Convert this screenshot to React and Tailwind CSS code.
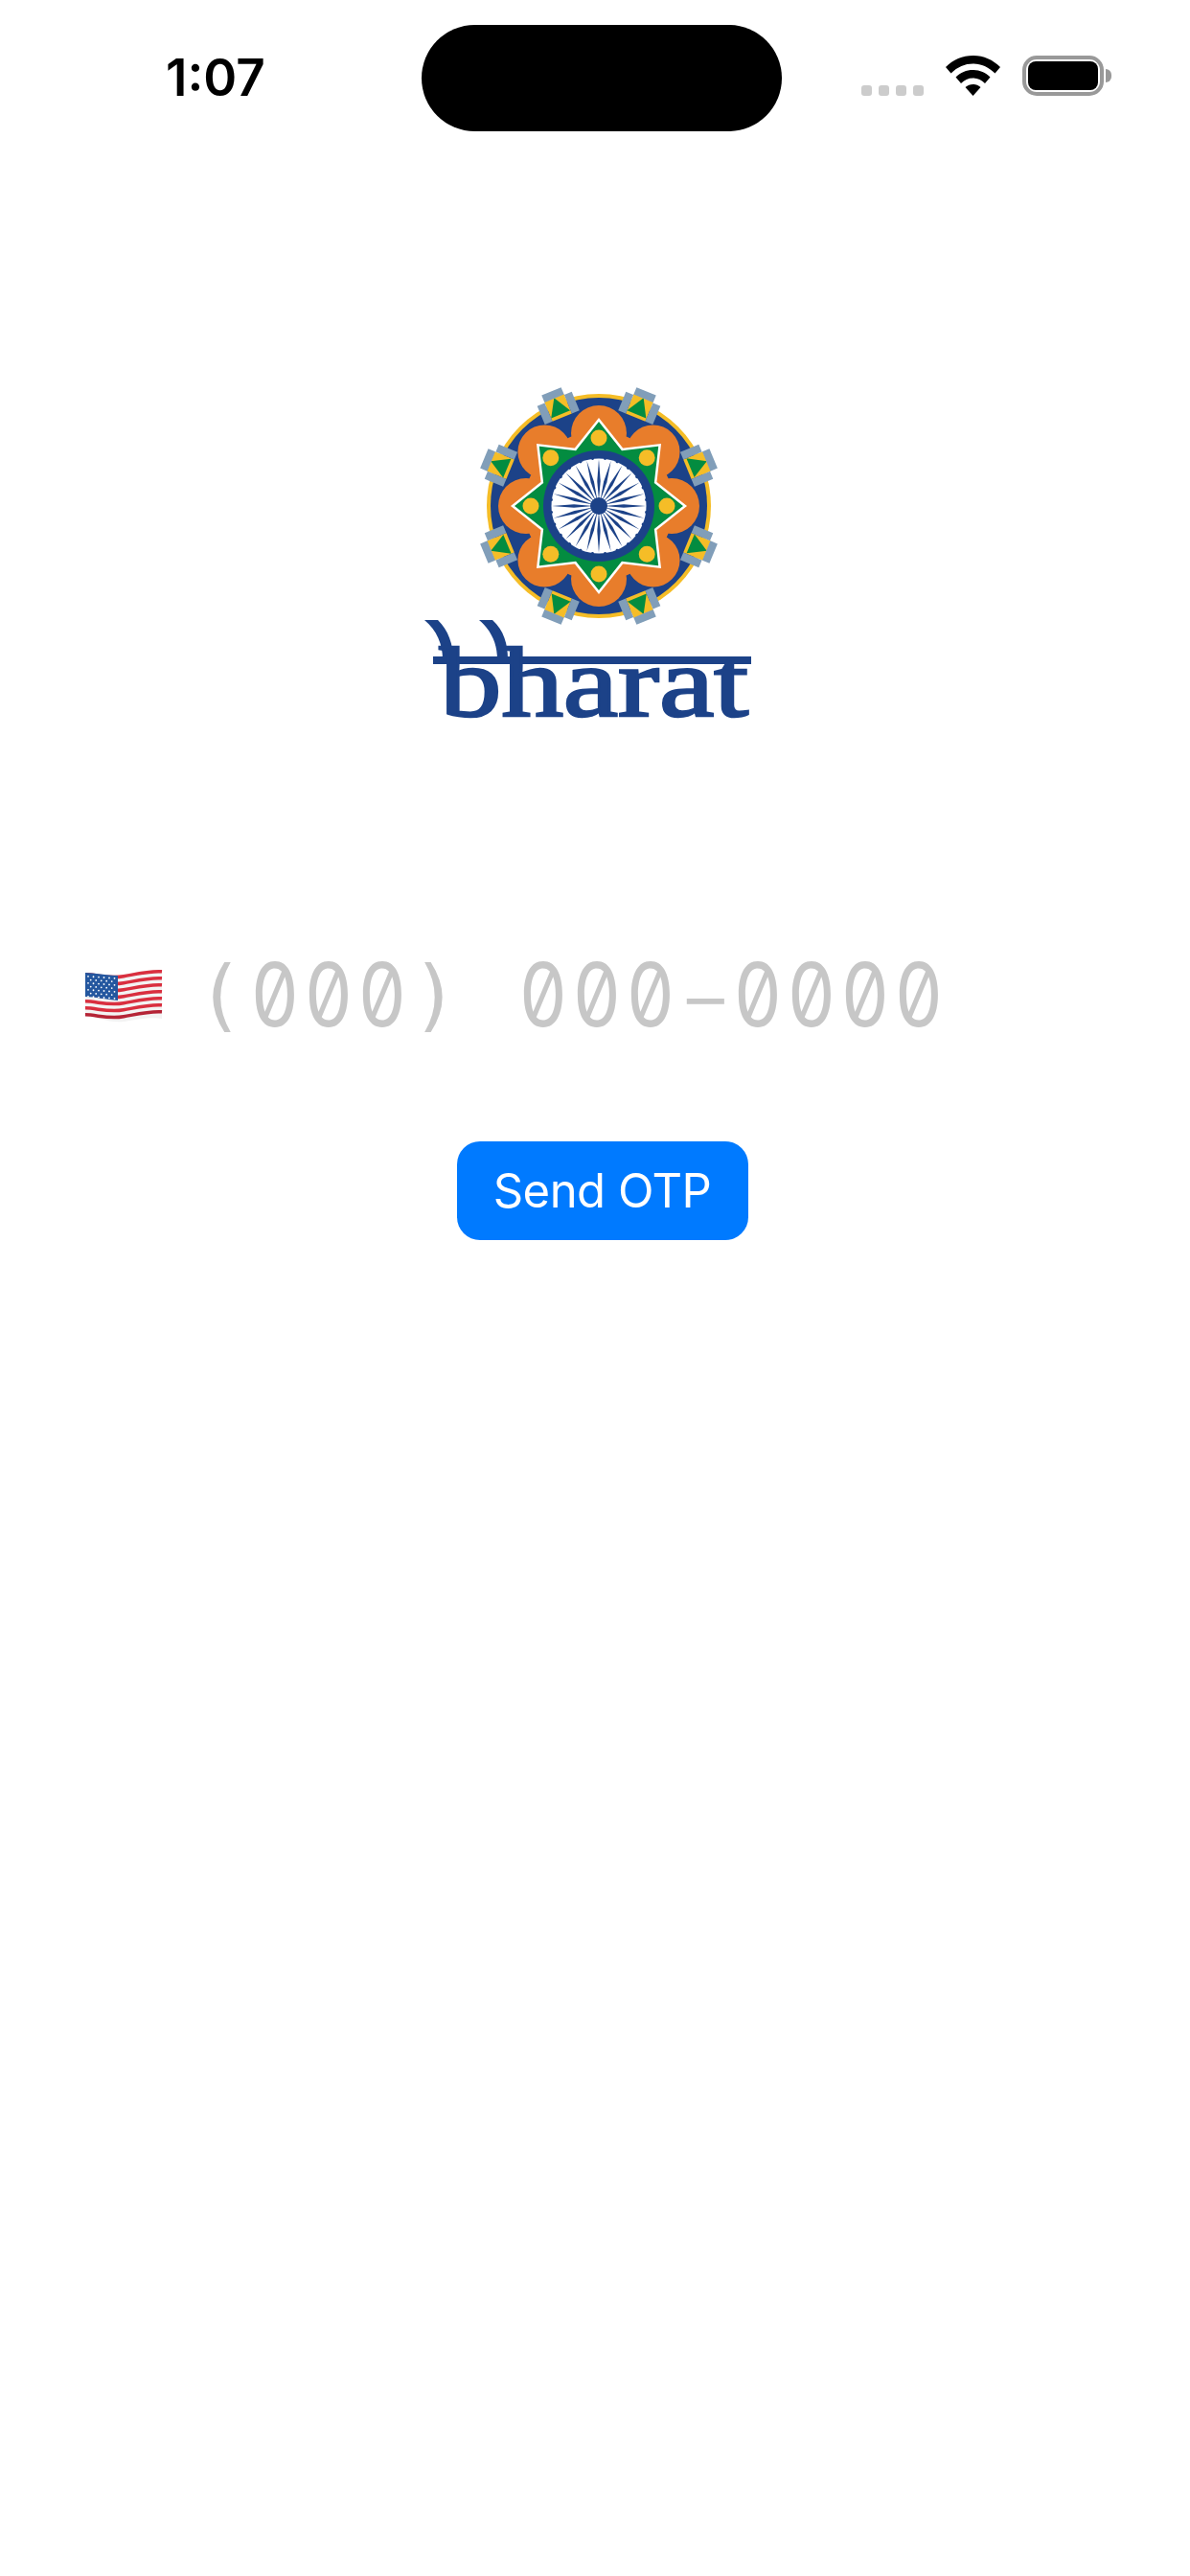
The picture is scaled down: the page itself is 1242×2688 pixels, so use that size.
const NAVY = "#1c4288";
const ANGLES = [0, 45, 90, 135, 180, 225, 270, 315];
const PHONE = "(000) 000-0000".split("");

function starPoints(outer, inner) {
  const pts = [];
  for (let i = 0; i < 16; i++) {
    const r = i % 2 === 0 ? outer : inner;
    const a = (i * 22.5 * Math.PI) / 180;
    pts.push(`${(r * Math.sin(a)).toFixed(2)},${(-r * Math.cos(a)).toFixed(2)}`);
  }
  return pts.join(" ");
}

function Ornament({ angle }) {
  return (
    <g transform={`rotate(${angle}) translate(0 -100)`}>
      <rect x="-11" y="-22" width="22" height="22" fill="#f5bd27" />
      <polygon points="0,-22 10.500,-3.500 -11,-3.500" fill="#038c40" />
      <rect x="-19.500" y="-21" width="8.500" height="21" fill="#819eb9" />
      <rect x="11" y="-21" width="8.500" height="21" fill="#819eb9" />
      <rect x="-11" y="-29.500" width="22" height="8" fill="#819eb9" />
    </g>
  );
}

function Emblem() {
  const spokes = Array.from({ length: 24 }, (_, i) => i * 15);
  return (
    <g transform="translate(625 528)">
      <circle r="117" fill="#f5bd27" />
      <circle r="113" fill={NAVY} />
      {ANGLES.map((a) => (
        <Ornament key={a} angle={a + 22.5} />
      ))}
      <circle r="78" fill="#e87d2b" />
      {ANGLES.map((a) => (
        <circle
          key={a}
          transform={`rotate(${a})`}
          cy={a % 90 === 0 ? -76 : -80}
          r={a % 90 === 0 ? 29 : 28}
          fill="#e87d2b"
        />
      ))}
      <polygon points={starPoints(90, 64)} fill="#038c40" stroke="#fff" strokeWidth="2.500" />
      {ANGLES.map((a) => (
        <circle key={a} transform={`rotate(${a})`} cy="-71" r="8.500" fill="#f5bd27" />
      ))}
      <circle r="58" fill={NAVY} />
      <circle r="49.500" fill="#fff" />
      {spokes.map((a) => (
        <g key={a} transform={`rotate(${a})`}>
          <polygon points="0,-49 1.700,-26 0,-6 -1.700,-26" fill={NAVY} />
          <circle transform="rotate(7.500)" cy="-50" r="1.500" fill={NAVY} />
        </g>
      ))}
      <circle r="9" fill={NAVY} />
    </g>
  );
}

function Logo() {
  return (
    <svg viewBox="440 385 350 385" className="w-[350px] h-[385px] mr-[12px]">
      <Emblem />
      {/* ascender flourishes above the headline bar */}
      <path d="M443 647 H457 C468 658 473 672 473 688 H462 C462 672 456 658 443 647 Z" fill={NAVY} />
      <path d="M500 647 H514 C526 658 530 672 530 688 H519 C519 672 513 658 500 647 Z" fill={NAVY} />
      <rect x="452" y="685" width="332" height="8" fill={NAVY} />
      <text
        x="459"
        y="747"
        fontFamily="'Liberation Serif', serif"
        fontSize="104"
        textLength="322"
        lengthAdjust="spacingAndGlyphs"
        fill={NAVY}
        stroke={NAVY}
        strokeWidth="2.500"
      >
        bharat
      </text>
    </svg>
  );
}

function UsFlag() {
  const stripes = Array.from({ length: 13 }, (_, i) => i);
  const stars = [];
  for (let row = 0; row < 7; row++) {
    for (let col = 0; col < 6; col++) {
      const x = 5 + col * 5.500 + (row % 2 ? 2.700 : 0);
      if (x < 35) stars.push([x, 11.500 + row * 3.500 + x * 0.07]);
    }
  }
  return (
    <svg viewBox="0 0 84 62" className="w-[84px] h-[62px] shrink-0">
      <path d="M2 8 C 14 8, 26 13, 42 10 S 70 4, 82 5 V 56 C 70 54, 56 57, 42 59 S 14 54, 2 53 Z" fill="#f3f3f3" />
      {stripes
        .filter((i) => i % 2 === 0)
        .map((i) => {
          const t = 1.800 + i * 3.500;
          return (
            <path
              key={i}
              d={`M2 ${8 + t} C 14 ${8 + t}, 26 ${13 + t}, 42 ${10 + t} S 70 ${4 + t}, 82 ${5 + t}`}
              stroke={i === 12 ? "#b52436" : "#d92f3f"}
              strokeWidth="3.500"
              fill="none"
            />
          );
        })}
      <path d="M2 8 C 12 8, 24 11, 36 11 V 37 C 24 36, 12 33, 2 33 Z" fill="#24579f" />
      {stars.map(([x, y]) => (
        <circle key={`${x}-${y}`} cx={x} cy={y} r="0.900" fill="#fff" />
      ))}
    </svg>
  );
}

function StatusBar() {
  return (
    <div className="flex h-[137px] pt-[26px] shrink-0">
      <div className="w-[440px] pl-[173px] pt-[27px] font-['Inter',sans-serif] font-semibold text-[53px] leading-[56px] text-black">
        1:07
      </div>
      <div className="w-[376px] h-[111px] bg-black rounded-[56px]" />
      <div className="flex items-end gap-[23px] pl-[83px] pb-[11px] h-[85px]">
        <div className="flex gap-[7px]">
          <div className="w-[11px] h-[11px] rounded-[3px] bg-[#cccccc]" />
          <div className="w-[11px] h-[11px] rounded-[3px] bg-[#cccccc]" />
          <div className="w-[11px] h-[11px] rounded-[3px] bg-[#cccccc]" />
          <div className="w-[11px] h-[11px] rounded-[3px] bg-[#cccccc]" />
        </div>
        <div className="flex items-center gap-[23px]">
          <svg viewBox="0 0 57 42" className="w-[57px] h-[42px]">
            <path d="M28.500 0C17.500 0 8 4.200 0 12l5.500 6.500C12.500 11.800 20 8.500 28.500 8.500S44.500 11.800 51.500 18.500L57 12C49 4.200 39.500 0 28.500 0Z" fill="#000" />
            <path d="M28.500 15C21.500 15 15.500 17.500 10.500 22.500L16 29C19.500 25.500 23.500 23.500 28.500 23.500S37.500 25.500 41 29L46.500 22.500C41.500 17.500 35.500 15 28.500 15Z" fill="#000" />
            <path d="M28.500 30C25.500 30 23 31 20.500 33L28.500 42L36.500 33C34 31 31.500 30 28.500 30Z" fill="#000" />
          </svg>
          <div className="flex items-center gap-[2px]">
            <div className="w-[85px] h-[42px] p-[2px] border-[4px] border-[#999999] rounded-[15px]">
              <div className="w-full h-full rounded-[8px] bg-black" />
            </div>
            <div className="w-[6px] h-[14px] rounded-r-[6px] bg-[#999999]" />
          </div>
        </div>
      </div>
    </div>
  );
}

function PhoneChar({ ch }) {
  if (ch === "0") {
    return (
      <span className="w-[56px] text-center scale-x-[0.85] font-['Inter',sans-serif] font-normal text-[92px] slashed-zero">
        {ch}
      </span>
    );
  }
  if (ch === "-") {
    return <span className="w-[56px] text-center font-['Inter',sans-serif] font-extralight text-[136px]">{ch}</span>;
  }
  return (
    <span className="w-[56px] text-center whitespace-pre font-['DejaVu_Sans_Mono',monospace] text-[82px]">
      {ch}
    </span>
  );
}

export default function App() {
  return (
    <div className="w-[1242px] h-[2688px] bg-white flex flex-col overflow-hidden">
      <StatusBar />
      <div className="flex flex-col items-center pt-[248px]">
        <Logo />
      </div>

      <div className="flex items-center gap-[31px] pl-[87px] mt-[223px] h-[90px]">
        <UsFlag />
        <div className="flex leading-[90px] text-[#c7c7c7]">
          {PHONE.map((ch, i) => (
            <PhoneChar key={i} ch={ch} />
          ))}
        </div>
      </div>

      <div className="flex justify-center mt-[108px] pl-[15px]">
        <button className="w-[304px] h-[103px] rounded-[24px] bg-[#007aff] text-white font-['Inter',sans-serif] text-[49px] tracking-[-0.5px]">
          Send OTP
        </button>
      </div>
    </div>
  );
}
